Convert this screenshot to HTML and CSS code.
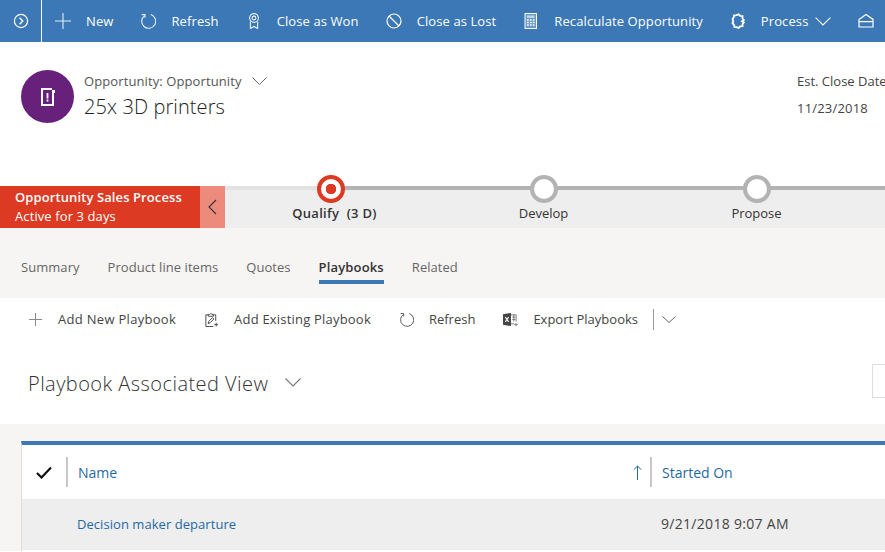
FILE: index.html
```html
<!DOCTYPE html>
<html lang="en">
<head>
    <meta charset="UTF-8">
    <meta name="viewport" content="width=device-width, initial-scale=1.0">
    <title>25x 3D printers - Opportunity</title>
    <link rel="stylesheet" href="styles.css">
</head>
<body>
    <!-- Command bar -->
    <div class="command-bar">
        <div class="home-btn">
            <svg width="16" height="16" viewBox="0 0 16 16" fill="none" stroke="#fff" stroke-width="1.2"><circle cx="8" cy="8" r="6.6"/><path d="M6.6 4.8 9.8 8l-3.2 3.2" stroke-width="1.4"/></svg>
        </div>
        <div class="commands">
            <div class="cmd">
                <svg class="icon" viewBox="0 0 16 16" fill="none" stroke="#fff" stroke-width="1.1" opacity=".85"><path d="M8 0v16M0 8h16"/></svg>
                <span>New</span>
            </div>
            <div class="cmd">
                <svg class="icon" viewBox="0 0 16 16" fill="none" stroke="#fff" stroke-width="1.1" opacity=".9"><path d="M4.600 2.600A7 7 0 1 0 10.800 1.600"/><path d="M1.800 2.200h3.200v3.200" transform="translate(0 -.6)"/></svg>
                <span>Refresh</span>
            </div>
            <div class="cmd">
                <svg class="icon" viewBox="0 0 16 16" fill="none" stroke="#fff" stroke-width="1.1" opacity=".9"><circle cx="8" cy="5" r="4.400"/><circle cx="8" cy="5" r="1.900"/><path d="M4.400 8.500v7L8 13.500l3.600 2v-7"/></svg>
                <span>Close as Won</span>
            </div>
            <div class="cmd">
                <svg class="icon" viewBox="0 0 16 16" fill="none" stroke="#fff" stroke-width="1.200"><circle cx="8" cy="8" r="7"/><path d="M3 3l10 10"/></svg>
                <span>Close as Lost</span>
            </div>
            <div class="cmd">
                <svg class="icon" viewBox="0 0 16 16" fill="none" stroke="#fff" stroke-width="1"><rect x="2" y=".5" width="11.500" height="15" fill="#fff" fill-opacity=".25"/><rect x="4" y="2.500" width="7.500" height="2.400" fill="#fff" fill-opacity=".6" stroke="none"/><path d="M4 7h7.500M4 9.500h7.500M4 12h7.500" stroke-width="1.400" stroke-dasharray="1.700 1.200"/></svg>
                <span>Recalculate Opportunity</span>
            </div>
            <div class="cmd">
                <svg class="icon" viewBox="0 0 16 16" fill="none" stroke="#fff" stroke-width="1.800"><path d="M6.500 2.200 8.600 1.400 10.200 3l2.300.2v2.300L13.800 7 12 8.200l1.800 1.300-1.300 1.700v2l-2.300.2-1.600 1.600-2.100-.8-2.200-.2-.2-2-1.600-1.800L3.300 8 2.500 6.200l1.300-1.800.2-1.800z"/></svg>
                <span>Process</span>
                <svg class="chev" width="16" height="9" viewBox="0 0 16 9" fill="none" stroke="#fff" stroke-width="1.100"><path d="M.6.6 8 8l7.400-7.400"/></svg>
            </div>
            <div class="cmd">
                <svg class="icon" viewBox="0 0 16 16" fill="none" stroke="#fff" stroke-width="1.200"><path d="M1 6.400 8 1.600l7 4.800V14H1zM1 8.600h14"/></svg>
            </div>
        </div>
    </div>

    <!-- Record header -->
    <div class="record-header">
        <div class="avatar">
            <svg width="14" height="18" viewBox="0 0 14 18"><path fill="#fff" d="M0 0h11v2h3v3h-1v13H0zM2 2v14h9V2z"/><path fill="#fff" d="M5.600 5h1.800v5.400H5.600zM5.600 11.600h1.800v1.800H5.600z"/></svg>
        </div>
        <div class="record-title">
            <div class="form-name">
                <span>Opportunity: Opportunity</span>
                <svg width="15" height="8" viewBox="0 0 15 8" fill="none" stroke="#666" stroke-width="1"><path d="M.5.5l7 7 7-7"/></svg>
            </div>
            <div class="record-name">25x 3D printers</div>
        </div>
        <div class="header-field">
            <div class="field-label">Est. Close Date</div>
            <div class="field-value">11/23/2018</div>
        </div>
    </div>

    <!-- Business process flow -->
    <div class="process-bar">
        <div class="process-name">
            <strong>Opportunity Sales Process</strong>
            <span>Active for 3 days</span>
        </div>
        <div class="process-toggle">
            <svg width="9" height="16" viewBox="0 0 9 16" fill="none" stroke="#333" stroke-width="1.100"><path d="M8 1 1 8l7 7"/></svg>
        </div>
        <div class="stages">
            <div class="stage active">
                <div class="stage-dot"></div>
                <div class="stage-name">Qualify&nbsp; (3 D)</div>
            </div>
            <div class="stage">
                <div class="stage-dot"></div>
                <div class="stage-name">Develop</div>
            </div>
            <div class="stage">
                <div class="stage-dot"></div>
                <div class="stage-name">Propose</div>
            </div>
        </div>
    </div>

    <!-- Tabs -->
    <div class="tabs">
        <div class="tab">Summary</div>
        <div class="tab">Product line items</div>
        <div class="tab">Quotes</div>
        <div class="tab selected">Playbooks</div>
        <div class="tab">Related</div>
    </div>

    <!-- Sub grid -->
    <div class="subgrid-section">
        <div class="toolbar">
            <div class="tool wide">
                <svg class="tool-icon" viewBox="0 0 16 16" fill="none" stroke="#8a8a8a" stroke-width="1.100"><path d="M8 1v14M1 8h14"/></svg>
                <span>Add New Playbook</span>
            </div>
            <div class="tool">
                <svg class="tool-icon" viewBox="0 0 16 16" fill="none" stroke="#444" stroke-width="1"><path d="M4.500 3H2v12.500h8M12.500 9.500V3h-2.500M4.500 4.500V2.500h1.500a1.500 1.500 0 0 1 2.500 0H10v2z"/><path d="M4.500 12.500 5 10l4-4 1.500 1.500-4 4z"/><path d="M13 11.500v4M11 13.500h4"/></svg>
                <span>Add Existing Playbook</span>
            </div>
            <div class="tool tight">
                <svg class="tool-icon" viewBox="0 0 16 16" fill="none" stroke="#555" stroke-width="1"><path d="M4.600 2.600A7 7 0 1 0 10.800 1.600"/><path d="M1.800 1.600h3.200v3.200"/></svg>
                <span>Refresh</span>
            </div>
            <div class="tool tight">
                <svg class="tool-icon" viewBox="0 0 16 16"><path fill="#444" d="M0 2.500 8.500 1v14L0 13.500z"/><path d="M2.500 5.500l3.500 5M6 5.500l-3.500 5" stroke="#fff" stroke-width="1.100"/><path d="M8.500 3H14v7M8.500 12.500h3M10 5.500h3M10 8h3M11.500 3v7" fill="none" stroke="#666" stroke-width=".9"/><path d="M11.500 13.500h3.500M13.500 12l1.500 1.500-1.500 1.500" fill="none" stroke="#666" stroke-width=".9"/></svg>
                <span>Export Playbooks</span>
            </div>
            <div class="tool-split">
                <svg width="14" height="7" viewBox="0 0 14 7" fill="none" stroke="#666" stroke-width="1"><path d="M.5.500l6.500 6 6.500-6"/></svg>
            </div>
        </div>
        <div class="view-row">
            <div class="view-name">Playbook Associated View</div>
            <svg width="16" height="9" viewBox="0 0 16 9" fill="none" stroke="#777" stroke-width="1.100"><path d="M.5.500 8 8l7.500-7.500"/></svg>
            <div class="search-box"></div>
        </div>
        <div class="grid-area">
            <div class="grid">
                <div class="grid-head">
                    <div class="cell-check">
                        <svg width="16" height="13" viewBox="0 0 16 13" fill="none" stroke="#111" stroke-width="2.200"><path d="M1 7l4.500 4.500L15 1.500"/></svg>
                    </div>
                    <div class="cell-name head-cell">
                        <span>Name</span>
                        <svg width="9" height="15" viewBox="0 0 9 15" fill="none" stroke="#1f69a5" stroke-width="1"><path d="M4.500 15V1M.8 4.700 4.500 1l3.700 3.700"/></svg>
                    </div>
                    <div class="cell-date head-cell"><span>Started On</span></div>
                </div>
                <div class="grid-row">
                    <div class="cell-check"></div>
                    <div class="cell-name row-link">Decision maker departure</div>
                    <div class="cell-date row-date">9/21/2018 9:07 AM</div>
                </div>
            </div>
        </div>
    </div>
</body>
</html>
```
FILE: styles.css
```css
:root {
    --blue: #3b78b5;
    --link: #1f69a5;
    --page: #f6f5f3;
    --stripe: #eeeeee;
}

html, body {
    height: 552px;
    overflow: hidden;
}

body {
    margin: 0;
    font-family: 'Open Sans', 'Noto Sans', sans-serif;
    font-size: 13px;
    color: #333;
    background: #fff;
}

.command-bar {
    display: flex;
    height: 42px;
    background: var(--blue);
    color: #fff;
}

.home-btn {
    width: 41px;
    border-right: 1px solid #fff;
    display: flex;
    align-items: center;
    justify-content: center;
}

.commands {
    display: flex;
    align-items: center;
    gap: 27px;
    padding-left: 13px;
    white-space: nowrap;
}

.cmd {
    display: flex;
    align-items: center;
    gap: 15px;
    letter-spacing: 0.1px;
}

.icon {
    width: 16px;
    height: 16px;
}

.chev {
    margin-left: -8px;
}

.record-header {
    display: flex;
    height: 144px;
    box-sizing: border-box;
    padding: 28px 0 0 21px;
}

.avatar {
    width: 53px;
    height: 53px;
    border-radius: 50%;
    background: #68217a;
    display: flex;
    align-items: center;
    justify-content: center;
    flex: none;
}

.record-title {
    margin-left: 10px;
    width: 713px;
    flex: none;
}

.form-name {
    display: flex;
    align-items: center;
    gap: 10px;
    height: 22px;
    color: #555;
    letter-spacing: 0.1px;
}

.record-name {
    font-size: 20px;
    font-weight: 300;
    line-height: 30px;
    color: #222;
    letter-spacing: 0.1px;
}

.header-field {
    white-space: nowrap;
    color: #444;
}

.field-label {
    height: 22px;
    line-height: 22px;
}

.field-value {
    margin-top: 7px;
    letter-spacing: 0.2px;
}

.process-bar {
    display: flex;
    height: 42px;
}

.process-name {
    width: 200px;
    box-sizing: border-box;
    padding: 2px 0 0 15px;
    background: #dc3a22;
    color: #fff;
    display: flex;
    flex-direction: column;
    line-height: 19px;
    letter-spacing: 0.1px;
}

.process-name strong {
    font-weight: 600;
}

.process-toggle {
    width: 25px;
    background: #ec8a7c;
    display: flex;
    align-items: center;
    justify-content: center;
}

/* the part of the line before the first stage is paler */
.stages {
    flex: 1;
    display: flex;
    background:
        linear-gradient(#e2e2e2, #e2e2e2) 0 0 / 92px 4px no-repeat,
        linear-gradient(#b3b3b3, #b3b3b3) 0 0 / 100% 4px no-repeat,
        var(--stripe);
}

.stage {
    width: 213px;
    display: flex;
    flex-direction: column;
    align-items: center;
    flex: none;
}

.stage:first-child {
    margin-left: -1px;
}

.stage-dot {
    width: 28px;
    height: 28px;
    box-sizing: border-box;
    border-radius: 50%;
    border: 4px solid #b3b3b3;
    background: #fff;
    margin-top: -11px;
}

.stage.active .stage-dot {
    border-color: #dc3a22;
    background: radial-gradient(circle, #dc3a22 0 5px, #fff 5.500px);
}

.stage-name {
    margin-top: 1px;
    line-height: 18px;
    color: #333;
}

.stage.active .stage-name {
    font-weight: 600;
    letter-spacing: 0.3px;
    padding-left: 8px;
}

.tabs {
    display: flex;
    height: 70px;
    box-sizing: border-box;
    padding: 26px 0 0 21px;
    gap: 28px;
    background: var(--page);
    color: #666;
    letter-spacing: 0.05px;
}

.tab {
    height: 30px;
    box-sizing: border-box;
    line-height: 27px;
    white-space: nowrap;
}

.tab.selected {
    color: #333;
    font-weight: 600;
    letter-spacing: 0.15px;
    border-bottom: 4px solid var(--blue);
}

.toolbar {
    display: flex;
    align-items: center;
    height: 42px;
    padding-left: 28px;
    gap: 28px;
    color: #444;
}

.tool {
    display: flex;
    align-items: center;
    gap: 15px;
    white-space: nowrap;
    letter-spacing: 0.2px;
}

.tool.wide {
    letter-spacing: 0.3px;
}

.tool.tight {
    letter-spacing: 0;
}

.tool-icon {
    width: 15px;
    height: 15px;
}

.tool-split {
    height: 21px;
    border-left: 1px solid #999;
    margin-left: -13px;
    padding-left: 8px;
    display: flex;
    align-items: center;
}

.view-row {
    display: flex;
    align-items: center;
    height: 84px;
    box-sizing: border-box;
    padding-left: 28px;
    gap: 17px;
}

.view-name {
    font-size: 20px;
    font-weight: 300;
    color: #333;
    letter-spacing: 0.45px;
    white-space: nowrap;
    margin-top: 2px;
}

.search-box {
    width: 30px;
    height: 34px;
    box-sizing: border-box;
    border: 1px solid #ddd;
    margin-left: auto;
    margin-right: -17px;
    margin-bottom: 2px;
}

.grid-area {
    background: var(--page);
    padding: 17px 0 0 21px;
}

.grid {
    border-top: 4px solid var(--blue);
    border-left: 1px solid #ddd;
    background: #fff;
}

.grid-head,
.grid-row {
    display: flex;
    align-items: center;
}

.grid-head {
    height: 54px;
}

.grid-row {
    height: 51px;
    background: var(--stripe);
    border-bottom: 1px solid #fff;
}

.cell-check {
    width: 44px;
    display: flex;
    justify-content: center;
    flex: none;
    box-sizing: border-box;
}

.head-cell {
    height: 30px;
    border-left: 2px solid #c8c8c8;
    display: flex;
    align-items: center;
    box-sizing: border-box;
    color: var(--link);
    font-size: 14px;
}

.cell-name {
    width: 584px;
    flex: none;
    padding-left: 10px;
    padding-right: 8px;
    box-sizing: border-box;
    justify-content: space-between;
}

.cell-date {
    padding-left: 10px;
    white-space: nowrap;
}

.row-link {
    color: var(--link);
    letter-spacing: 0.05px;
    padding-left: 11px;
    padding-bottom: 2px;
}

.row-date {
    padding-left: 11px;
    padding-bottom: 2px;
    font-size: 14px;
    color: #444;
    letter-spacing: 0.3px;
}
```
